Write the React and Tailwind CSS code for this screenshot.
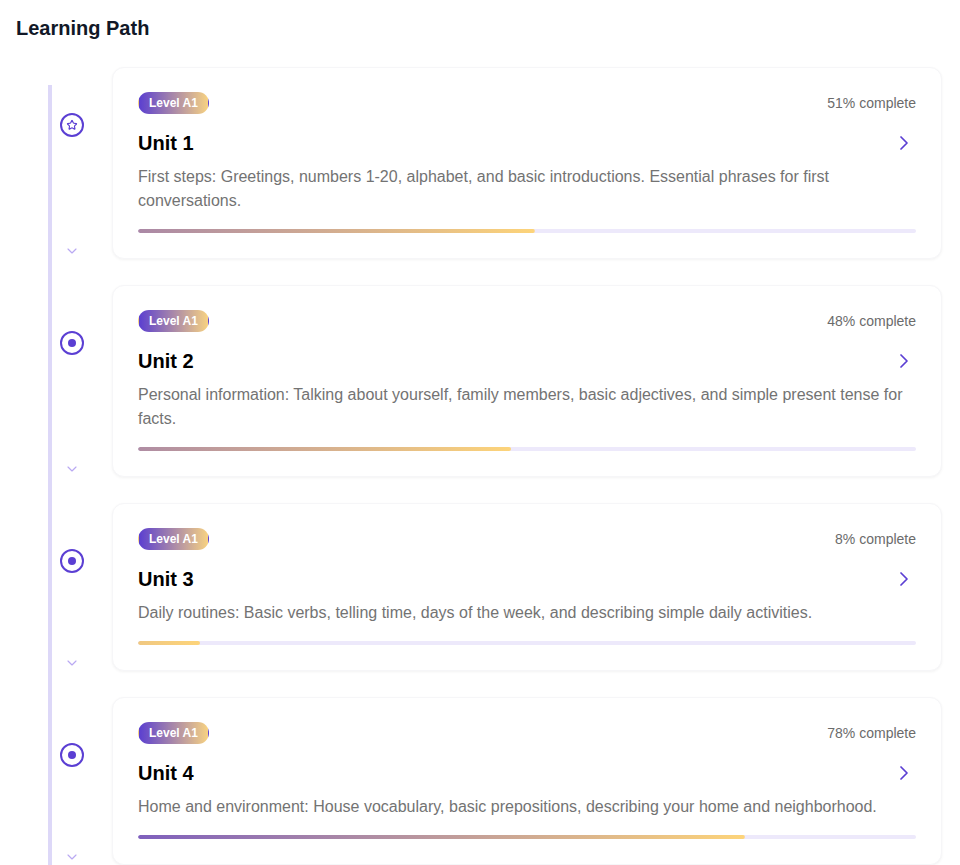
import React from "react";
import { ChevronRight, ChevronDown } from "lucide-react";

const units = [
  {
    title: "Unit 1",
    progress: 51,
    desc: "First steps: Greetings, numbers 1-20, alphabet, and basic introductions. Essential phrases for first conversations.",
    star: true,
  },
  {
    title: "Unit 2",
    progress: 48,
    desc: "Personal information: Talking about yourself, family members, basic adjectives, and simple present tense for facts.",
  },
  {
    title: "Unit 3",
    progress: 8,
    desc: "Daily routines: Basic verbs, telling time, days of the week, and describing simple daily activities.",
  },
  {
    title: "Unit 4",
    progress: 78,
    desc: "Home and environment: House vocabulary, basic prepositions, describing your home and neighborhood.",
  },
];

function StepIcon({ star }) {
  return (
    <svg width="24" height="24" viewBox="0 0 24 24" fill="none">
      <circle cx="12" cy="12" r="11" stroke="#5b3fd3" strokeWidth="2" />
      {star ? (
        <svg x="6.5" y="6.5" width="11" height="11" viewBox="0 0 24 24" fill="none">
          <path
            d="M11.525 2.295a.53.53 0 0 1 .95 0l2.31 4.679a2.123 2.123 0 0 0 1.595 1.16l5.166.756a.53.53 0 0 1 .294.904l-3.736 3.638a2.123 2.123 0 0 0-.611 1.878l.882 5.14a.53.53 0 0 1-.771.56l-4.618-2.428a2.122 2.122 0 0 0-1.973 0L6.396 21.01a.53.53 0 0 1-.77-.56l.881-5.139a2.122 2.122 0 0 0-.611-1.879L2.16 9.795a.53.53 0 0 1 .294-.906l5.165-.755a2.122 2.122 0 0 0 1.597-1.16z"
            stroke="#5b3fd3"
            strokeWidth="2.6"
            strokeLinejoin="round"
          />
        </svg>
      ) : (
        <circle cx="12" cy="12" r="4" fill="#5b3fd3" />
      )}
    </svg>
  );
}

function Progress({ value }) {
  const p = value / 100;
  return (
    <div className="mt-4 h-1 w-full rounded-full bg-[#ede9fb] overflow-hidden">
      <div
        className="h-full rounded-full bg-[linear-gradient(to_right,#5b3fd0,#fdd47a)] bg-no-repeat"
        style={{
          width: `${value}%`,
          backgroundSize: `${100 / p}% 100%`,
          backgroundPosition: "right center",
        }}
      />
    </div>
  );
}

function UnitRow({ unit }) {
  return (
    <div className="flex gap-4">
      <div className="w-12 shrink-0 flex flex-col items-center pt-[46px]">
        <StepIcon star={unit.star} />
        <div className="mt-auto">
          <ChevronDown size={16} strokeWidth={1.75} color="#b9a9f2" />
        </div>
      </div>
      <div className="flex-1 rounded-xl border border-[#f6f6f8] bg-white p-[25px] pt-6 shadow-[0_1px_3px_rgba(0,0,0,0.05)]">
        <div className="flex items-center justify-between">
          <span className="rounded-full border border-transparent bg-[linear-gradient(to_right,#5b3fd0,#f7d282)] px-2.5 py-0.5 text-xs font-bold leading-4 text-white">
            Level A1
          </span>
          <span className="text-sm text-[#6b6b6b]">{unit.progress}% complete</span>
        </div>
        <div className="mt-[15px] flex h-7 items-center justify-between">
          <h3 className="text-xl font-bold leading-7 text-black">{unit.title}</h3>
          <ChevronRight size={24} strokeWidth={1.75} color="#5b3fd3" />
        </div>
        <p className="mt-2 text-base leading-6 text-[#737373]">{unit.desc}</p>
        <Progress value={unit.progress} />
      </div>
    </div>
  );
}

export default function App() {
  return (
    <div
      className="min-h-screen bg-white pl-4 pr-[18px] pt-4"
      style={{ fontFamily: '"Liberation Sans", Arial, sans-serif' }}
    >
      <h2 className="text-xl font-bold leading-6 text-[#111827]">Learning Path</h2>
      <div className="relative ml-8 mt-[27px] flex flex-col gap-[26px]">
        <div className="absolute left-0 top-[18px] bottom-[-200px] w-1 bg-[#ddd8f8]" />
        {units.map((u) => (
          <UnitRow key={u.title} unit={u} />
        ))}
      </div>
    </div>
  );
}
